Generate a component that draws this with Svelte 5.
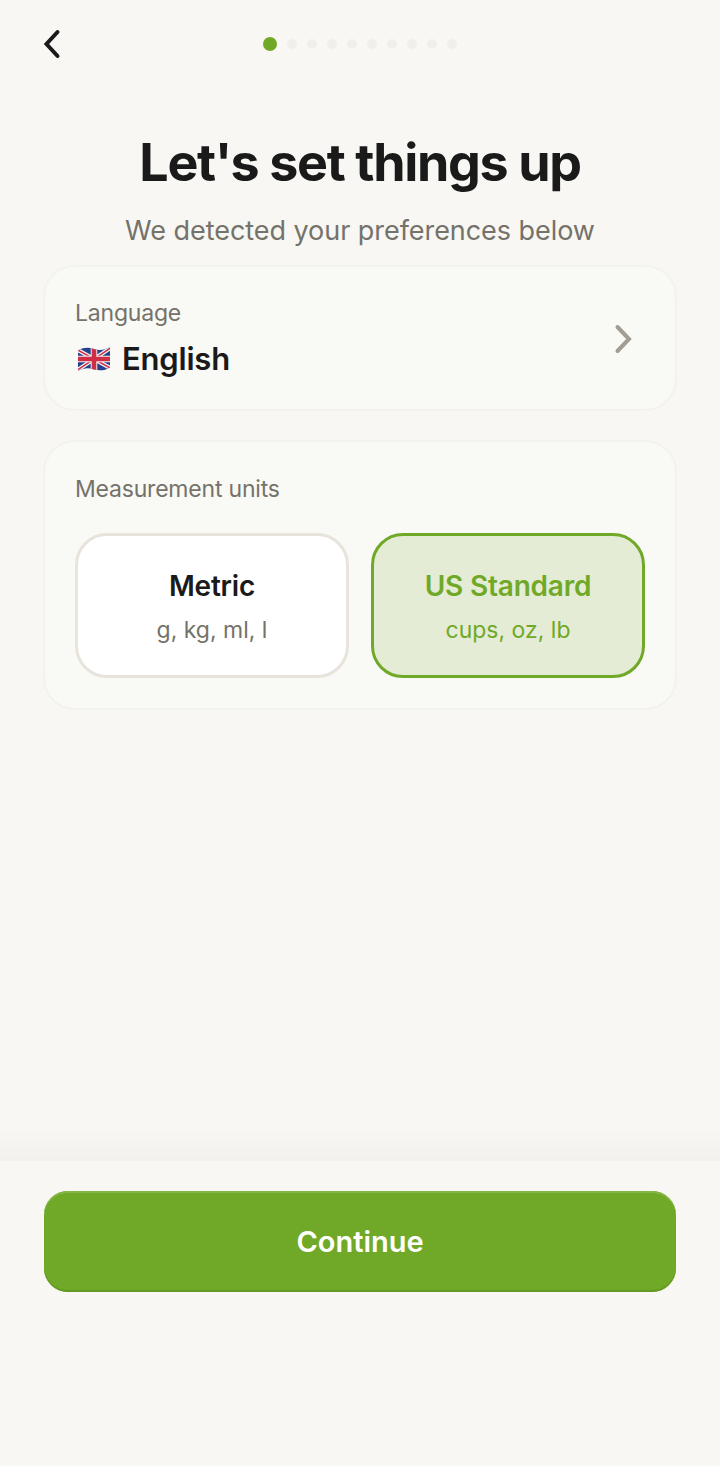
<script>
  let total = 10;
  let active = 0;
  let selectedUnit = "us";

  const units = [
    { id: "metric", name: "Metric", hint: "g, kg, ml, l" },
    { id: "us", name: "US Standard", hint: "cups, oz, lb" }
  ];
</script>

<div class="screen">
  <header class="topbar">
    <button class="back" aria-label="Back">
      <svg width="20" height="32" viewBox="0 0 20 32">
        <path d="M15.5 4 L4.5 16 L15.5 28" fill="none" stroke="#1a1a1a" stroke-width="4" stroke-linecap="round" stroke-linejoin="miter" />
      </svg>
    </button>
    <div class="dots">
      {#each Array(total) as _, i}
        <span class="dot" class:on={i === active}></span>
      {/each}
    </div>
  </header>

  <main class="content">
    <h1>Let's set things up</h1>
    <p class="subtitle">We detected your preferences below</p>

    <section class="card language">
      <div>
        <div class="label">Language</div>
        <div class="lang-value">
          <svg class="flag" width="36" height="26" viewBox="0 0 36 26">
            <defs>
              <clipPath id="flagclip">
                <path d="M2 4.5 C8 1 13 1.5 18 3 C24 5 29 4 34 1 L34 21.5 C29 24.5 24 25 18 23.5 C13 21.5 8 21.5 2 25 Z" />
              </clipPath>
            </defs>
            <g clip-path="url(#flagclip)">
              <rect width="36" height="26" fill="#26408a" />
              <path d="M0 3 L36 23 M0 25 L36 1" stroke="#f4f0f2" stroke-width="4" />
              <path d="M0 3 L36 23 M0 25 L36 1" stroke="#cf2f45" stroke-width="1.4" />
              <path d="M18 0 V26 M0 13 H36" stroke="#f4f0f2" stroke-width="6.6" />
              <path d="M18 0 V26 M0 13 H36" stroke="#cf2f45" stroke-width="4.6" />
            </g>
          </svg>
          <span>English</span>
        </div>
      </div>
      <svg class="chevron" width="20" height="32" viewBox="0 0 20 32">
        <path d="M4.5 4 L16 16 L4.5 28" fill="none" stroke="#a29c92" stroke-width="4" stroke-linecap="round" />
      </svg>
    </section>

    <section class="card measure">
      <div class="label">Measurement units</div>
      <div class="options">
        {#each units as unit}
          <button class="option" class:selected={unit.id === selectedUnit} on:click={() => (selectedUnit = unit.id)}>
            <span class="name">{unit.name}</span>
            <span class="hint">{unit.hint}</span>
          </button>
        {/each}
      </div>
    </section>
  </main>

  <footer class="footer">
    <button class="continue">Continue</button>
  </footer>
</div>

<style>
  :global(body) {
    margin: 0;
    background: #f8f7f3;
  }

  .screen {
    display: flex;
    flex-direction: column;
    height: 1466px;
    background: #f8f7f3;
    font-family: Inter, "Liberation Sans", sans-serif;
    color: #1a1a1a;
  }

  button {
    font-family: inherit;
    cursor: pointer;
  }

  .topbar {
    display: flex;
    align-items: center;
    justify-content: center;
    position: relative;
    height: 88px;
  }

  .back {
    position: absolute;
    left: 42px;
    top: 28px;
    padding: 0;
    border: none;
    background: none;
    line-height: 0;
  }

  .dots {
    display: flex;
    align-items: center;
    gap: 10px;
  }

  .dot {
    width: 10px;
    height: 10px;
    border-radius: 50%;
    background: #f1efeb;
  }

  .dot.on {
    width: 14px;
    height: 14px;
    background: #70a928;
  }

  .content {
    flex: 1;
    display: flex;
    flex-direction: column;
    padding: 0 43px;
  }

  h1 {
    margin: 40px 0 0;
    height: 70px;
    font-size: 52px;
    line-height: 70px;
    font-weight: 700;
    letter-spacing: -1.35px;
    text-align: center;
  }

  .subtitle {
    margin: 14px 0 0;
    font-size: 27px;
    line-height: 38px;
    letter-spacing: -0.05px;
    color: #75726a;
    text-align: center;
  }

  .card {
    box-sizing: border-box;
    margin-top: 15px;
    background: #f9f9f5;
    border: 2px solid #f4f2ee;
    border-radius: 32px;
  }

  .language {
    display: flex;
    align-items: center;
    justify-content: space-between;
    height: 146px;
    padding: 2px 42px 0 30px;
  }

  .label {
    font-size: 23px;
    line-height: 32px;
    letter-spacing: -0.2px;
    color: #75726a;
  }

  .lang-value {
    display: flex;
    align-items: center;
    gap: 10px;
    margin-top: 8px;
    font-size: 31px;
    line-height: 44px;
    font-weight: 600;
    letter-spacing: -0.2px;
  }

  .flag {
    margin-left: 1px;
    flex: none;
  }

  .chevron {
    flex: none;
  }

  .measure {
    margin-top: 29px;
    height: 270px;
    padding: 31px 30px 0;
  }

  .options {
    display: flex;
    gap: 22px;
    margin-top: 28px;
  }

  .option {
    box-sizing: border-box;
    flex: 1;
    height: 145px;
    display: flex;
    flex-direction: column;
    align-items: center;
    justify-content: center;
    gap: 9px;
    padding: 1px 0 0;
    background: #fff;
    border: 3px solid #e8e4dc;
    border-radius: 32px;
    color: #1a1a1a;
  }

  .name {
    font-size: 28px;
    line-height: 38px;
    font-weight: 600;
    letter-spacing: -0.2px;
  }

  .hint {
    font-size: 23px;
    line-height: 32px;
    color: #75726a;
  }

  .option.selected {
    background: #e5ecd6;
    border-color: #70a928;
    color: #70a928;
  }

  .option.selected .hint {
    color: #70a928;
  }

  .footer {
    position: relative;
    height: 305px;
    padding: 30px 44px 0;
    box-sizing: border-box;
    background: #f8f7f3;
  }

  /* soft shade sitting above the footer edge */
  .footer::before {
    content: "";
    position: absolute;
    left: 0;
    right: 0;
    top: -32px;
    height: 32px;
    background: linear-gradient(to bottom, rgba(240, 238, 234, 0), #f3f1ed);
  }

  .continue {
    display: block;
    width: 100%;
    height: 101px;
    border: none;
    border-radius: 24px;
    background: #70a928;
    box-shadow: inset 0 -2px 0 #659a22, inset 0 2px 0 #84b545;
    color: #fff;
    font-size: 29px;
    font-weight: 600;
  }
</style>
